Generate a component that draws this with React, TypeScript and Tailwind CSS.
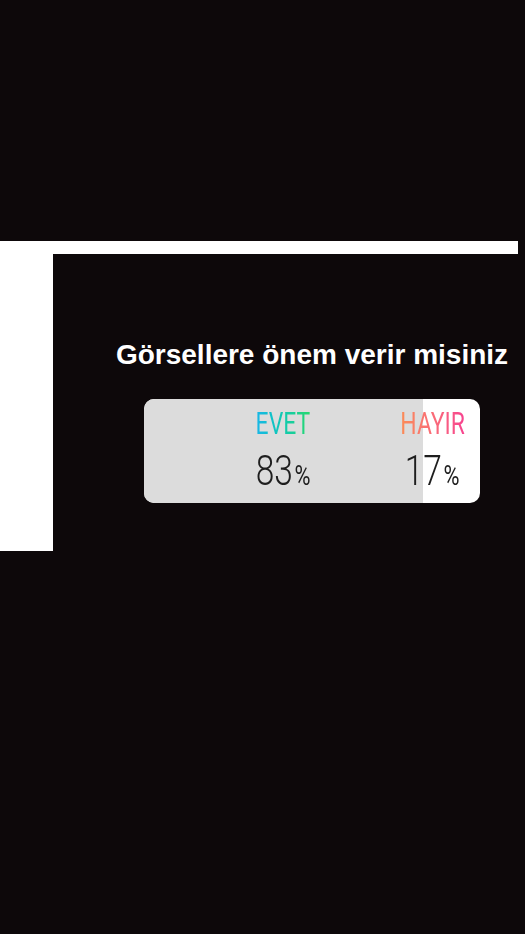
import React from "react";

const options = [
  { label: "EVET", pct: 83, grad: "from-[#1ab6e8] to-[#27d86a]" },
  { label: "HAYIR", pct: 17, grad: "from-[#fb8c55] to-[#f7418f]" },
];

export default function App() {
  return (
    <div className="min-h-[934px] w-[525px] bg-[#0d080a] pt-[241px]">
      <div className="h-[13px] w-[518px] bg-white" />
      <div className="flex">
        <div className="h-[297px] w-[53px] bg-white" />
        <div className="flex flex-col pl-[91px] pt-[85px]">
          {/* question */}
          <div className="flex w-[336px] justify-center">
            <h1 className="whitespace-nowrap font-['Liberation_Sans',sans-serif] text-[28px] font-bold leading-[32px] text-white">
              Görsellere önem verir misiniz
            </h1>
          </div>

          {/* poll card */}
          <div className="relative mt-[28px] h-[104px] w-[336px] overflow-hidden rounded-[10px] bg-white">
            <div className="absolute inset-y-0 left-0 bg-[#dcdcdc]" style={{ width: `${options[0].pct}%` }} />
            <div className="relative flex gap-[54px] pl-[91px] pt-[8px] font-['Roboto',sans-serif]">
              {options.map((o) => (
                <div key={o.label} className="flex w-[100px] flex-col items-center">
                  <span
                    className={`inline-block scale-x-[0.74] bg-gradient-to-r ${o.grad} bg-clip-text text-[31px] leading-[34px] text-transparent`}
                  >
                    {o.label}
                  </span>
                  <span className="mt-[6px] inline-flex scale-x-[0.78] items-baseline font-light text-[#1e1e1e]">
                    <span className="text-[43px] leading-[46px]">{o.pct}</span>
                    <span className="ml-[2px] text-[28px] font-normal leading-[30px]">%</span>
                  </span>
                </div>
              ))}
            </div>
          </div>
        </div>
      </div>
    </div>
  );
}
